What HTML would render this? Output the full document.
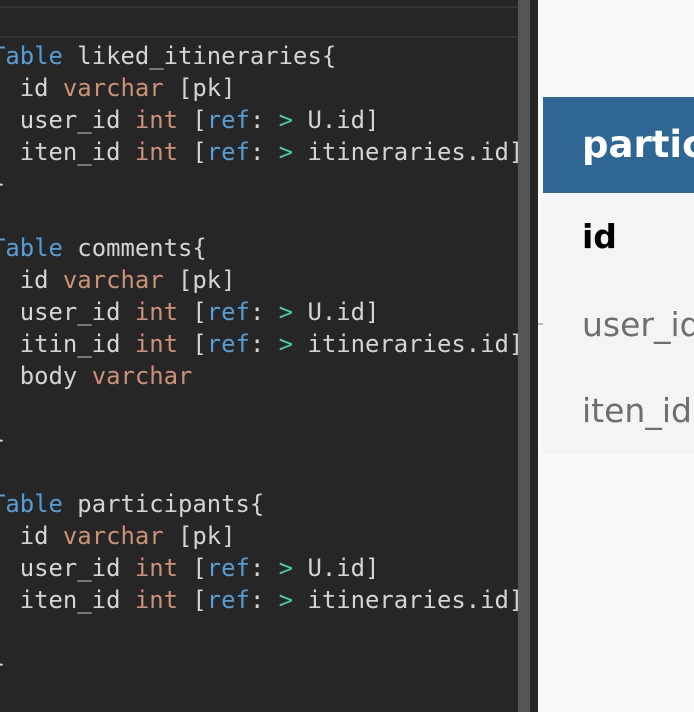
<!DOCTYPE html>
<html><head><style>
body{margin:0;width:694px;height:712px;overflow:hidden;background:#f9f9f9;position:relative;font-family:"DejaVu Sans Mono","Liberation Mono",monospace}
.ed{position:absolute;left:0;top:0;width:518px;height:712px;background:#262626}
.l1{position:absolute;left:0;top:6px;width:518px;height:2px;background:#333}
.l2{position:absolute;left:0;top:36px;width:518px;height:2px;background:#333}
.sb{position:absolute;left:518px;top:0;width:12px;height:712px;background:#555}
.g{position:absolute;left:530px;top:0;width:8px;height:712px;background:#262626}
pre{position:absolute;left:-9px;top:40px;margin:0;font-size:23.9px;line-height:32px;color:#d4d4d4;font-family:"DejaVu Sans Mono",monospace}
.k{color:#569cd6}.t{color:#ce9178}.a{color:#4ec9b0}
.card{position:absolute;left:543px;top:97px;width:160px;height:357px;background:#f4f4f4}
.hd{position:absolute;left:543px;top:97px;width:160px;height:96px;background:#2f6794;color:#fff;font:bold 37px "DejaVu Sans","Liberation Sans",sans-serif;line-height:96px;padding-left:39px;box-sizing:border-box;white-space:nowrap;overflow:hidden}
.r{position:absolute;left:582px;font:33px "DejaVu Sans","Liberation Sans",sans-serif;color:#6e6e6e;white-space:nowrap}
.c{position:absolute;left:538px;top:323px;width:5px;height:2px;background:#bbb}
</style></head><body>
<div class="ed"></div><div class="l1"></div><div class="l2"></div>
<pre><span class="k">Table</span> liked_itineraries{
  id <span class="t">varchar</span> [pk]
  user_id <span class="t">int</span> [<span class="k">ref</span>: <span class="a">&gt;</span> U.id]
  iten_id <span class="t">int</span> [<span class="k">ref</span>: <span class="a">&gt;</span> itineraries.id]
}

<span class="k">Table</span> comments{
  id <span class="t">varchar</span> [pk]
  user_id <span class="t">int</span> [<span class="k">ref</span>: <span class="a">&gt;</span> U.id]
  itin_id <span class="t">int</span> [<span class="k">ref</span>: <span class="a">&gt;</span> itineraries.id]
  body <span class="t">varchar</span>

}

<span class="k">Table</span> participants{
  id <span class="t">varchar</span> [pk]
  user_id <span class="t">int</span> [<span class="k">ref</span>: <span class="a">&gt;</span> U.id]
  iten_id <span class="t">int</span> [<span class="k">ref</span>: <span class="a">&gt;</span> itineraries.id]

}</pre>
<div class="sb"></div><div class="g"></div>
<div class="card"></div>
<div class="hd">participants</div>
<div class="r" style="top:217px;color:#000;font-weight:bold">id</div>
<div class="r" style="top:305px">user_id</div>
<div class="r" style="top:391px">iten_id</div>
<div class="c"></div>
</body></html>
